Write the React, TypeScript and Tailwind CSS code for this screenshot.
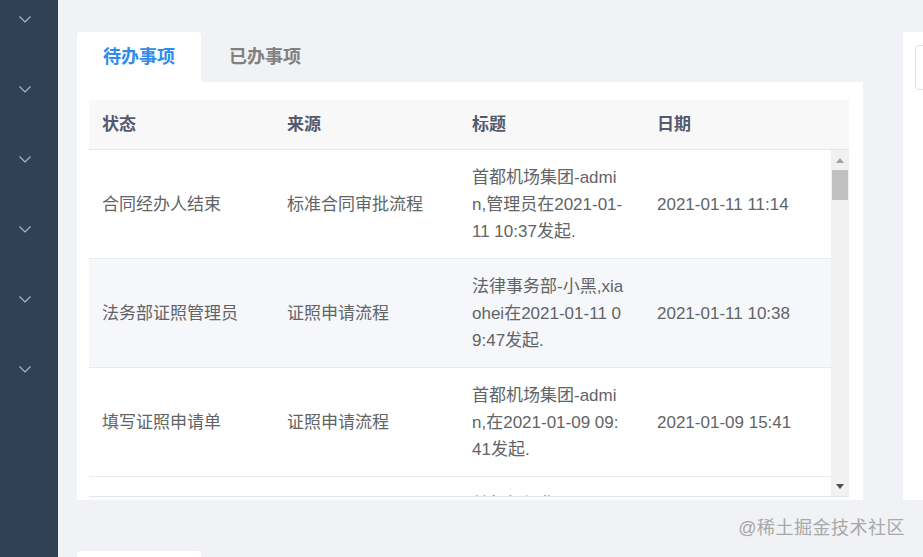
import React from "react";

const FONT = '"Liberation Sans", "Noto Sans CJK SC", Arial, sans-serif';

type Row = { status: string; source: string; title: string; date: string; bg?: string };

const rows: Row[] = [
  {
    status: "合同经办人结束",
    source: "标准合同审批流程",
    title: "首都机场集团-admin,管理员在2021-01-11 10:37发起.",
    date: "2021-01-11 11:14",
  },
  {
    status: "法务部证照管理员",
    source: "证照申请流程",
    title: "法律事务部-小黑,xiaohei在2021-01-11 09:47发起.",
    date: "2021-01-11 10:38",
    bg: "bg-[#f5f7fa]",
  },
  {
    status: "填写证照申请单",
    source: "证照申请流程",
    title: "首都机场集团-admin,在2021-01-09 09:41发起.",
    date: "2021-01-09 15:41",
  },
  {
    status: "",
    source: "",
    title: "首都机场集团-admin,管理员在2021-01-08 16:20发起.",
    date: "",
  },
];

function Chevron() {
  return (
    <svg width="12" height="7" viewBox="0 0 12 7" fill="none">
      <path d="M0.5 0.5 L6 6 L11.5 0.5" stroke="#aeb9c9" strokeWidth="1.1" />
    </svg>
  );
}

export default function App() {
  return (
    <div
      className="relative flex h-[557px] w-[923px] overflow-hidden bg-[#f0f2f5]"
      style={{ fontFamily: FONT }}
    >
      {/* Sidebar */}
      <aside className="flex w-[58px] shrink-0 flex-col items-center gap-[63px] bg-[#304156] pt-[16px] pr-[8px]">
        {Array.from({ length: 6 }).map((_, i) => (
          <Chevron key={i} />
        ))}
      </aside>

      {/* Main */}
      <main className="flex flex-1 gap-[40px] pl-[19px] pt-[32px]">
        <div className="flex w-[786px] shrink-0 flex-col">
          {/* Card 1 */}
          <div className="flex h-[468px] shrink-0 flex-col">
            <div className="flex h-[50px] shrink-0">
              <div className="flex w-[124px] items-center justify-center rounded-t-[4px] bg-white text-[18px] font-bold text-[#2d8cf0]">
                待办事项
              </div>
              <div className="flex w-[124px] items-center justify-center pl-[4px] text-[18px] font-bold text-[#808080]">
                已办事项
              </div>
            </div>
            <div className="flex flex-1 flex-col overflow-hidden bg-white pl-[12px] pr-[14px] pt-[18px]">
              <div className="flex w-[760px] flex-col">
                {/* Header */}
                <div className="grid h-[50px] grid-cols-[185px_185px_185px_1fr] items-center border-b border-[#e3e5e8] bg-[#f8f8f9] text-[17px] font-bold text-[#515a6e]">
                  <div className="pl-[13px]">状态</div>
                  <div className="pl-[13px]">来源</div>
                  <div className="pl-[13px]">标题</div>
                  <div className="pl-[13px]">日期</div>
                </div>
                {/* Body */}
                <div className="flex h-[347px] border-b border-[#e3e5e8]">
                  <div className="w-[742px] overflow-hidden">
                    {rows.map((r, i) => (
                      <div
                        key={i}
                        className={`grid h-[109px] shrink-0 grid-cols-[185px_185px_185px_1fr] items-center border-b border-[#e8eaec] text-[17px] leading-[27px] text-[#626466] ${r.bg ?? "bg-white"}`}
                      >
                        <div className="pl-[13px]">{r.status}</div>
                        <div className="pl-[13px]">{r.source}</div>
                        <div className="pl-[13px]">
                          <div className="w-[152.5px] break-all">{r.title}</div>
                        </div>
                        <div className="pl-[13px] whitespace-nowrap">{r.date}</div>
                      </div>
                    ))}
                  </div>
                  {/* Scrollbar */}
                  <div className="flex w-[18px] flex-col items-center bg-[#f1f1f1]">
                    <div className="flex h-[20px] w-full items-center justify-center">
                      <svg width="8" height="5" viewBox="0 0 8 5">
                        <path d="M4 0 L8 5 L0 5 Z" fill="#a3a3a3" />
                      </svg>
                    </div>
                    <div className="h-[30px] w-[16px] bg-[#c1c1c1]" />
                    <div className="flex-1" />
                    <div className="flex h-[20px] w-full items-center justify-center">
                      <svg width="8" height="5" viewBox="0 0 8 5">
                        <path d="M0 0 L8 0 L4 5 Z" fill="#505050" />
                      </svg>
                    </div>
                  </div>
                </div>
              </div>
            </div>
          </div>
          {/* Card 2 tab peek */}
          <div className="mt-[51px] h-[10px] w-[124px] shrink-0 rounded-t-[4px] bg-white" />
        </div>

        {/* Right panel */}
        <div className="h-[468px] flex-1 bg-white pl-[12px] pt-[13px]">
          <div className="h-[45px] w-[40px] rounded-[4px] border border-[#dcdfe6]" />
        </div>
      </main>

      {/* Watermark */}
      <div className="absolute right-[18px] top-[515px] text-[18px] tracking-[0.5px] text-[#a8a8a8]">
        @稀土掘金技术社区
      </div>
    </div>
  );
}
